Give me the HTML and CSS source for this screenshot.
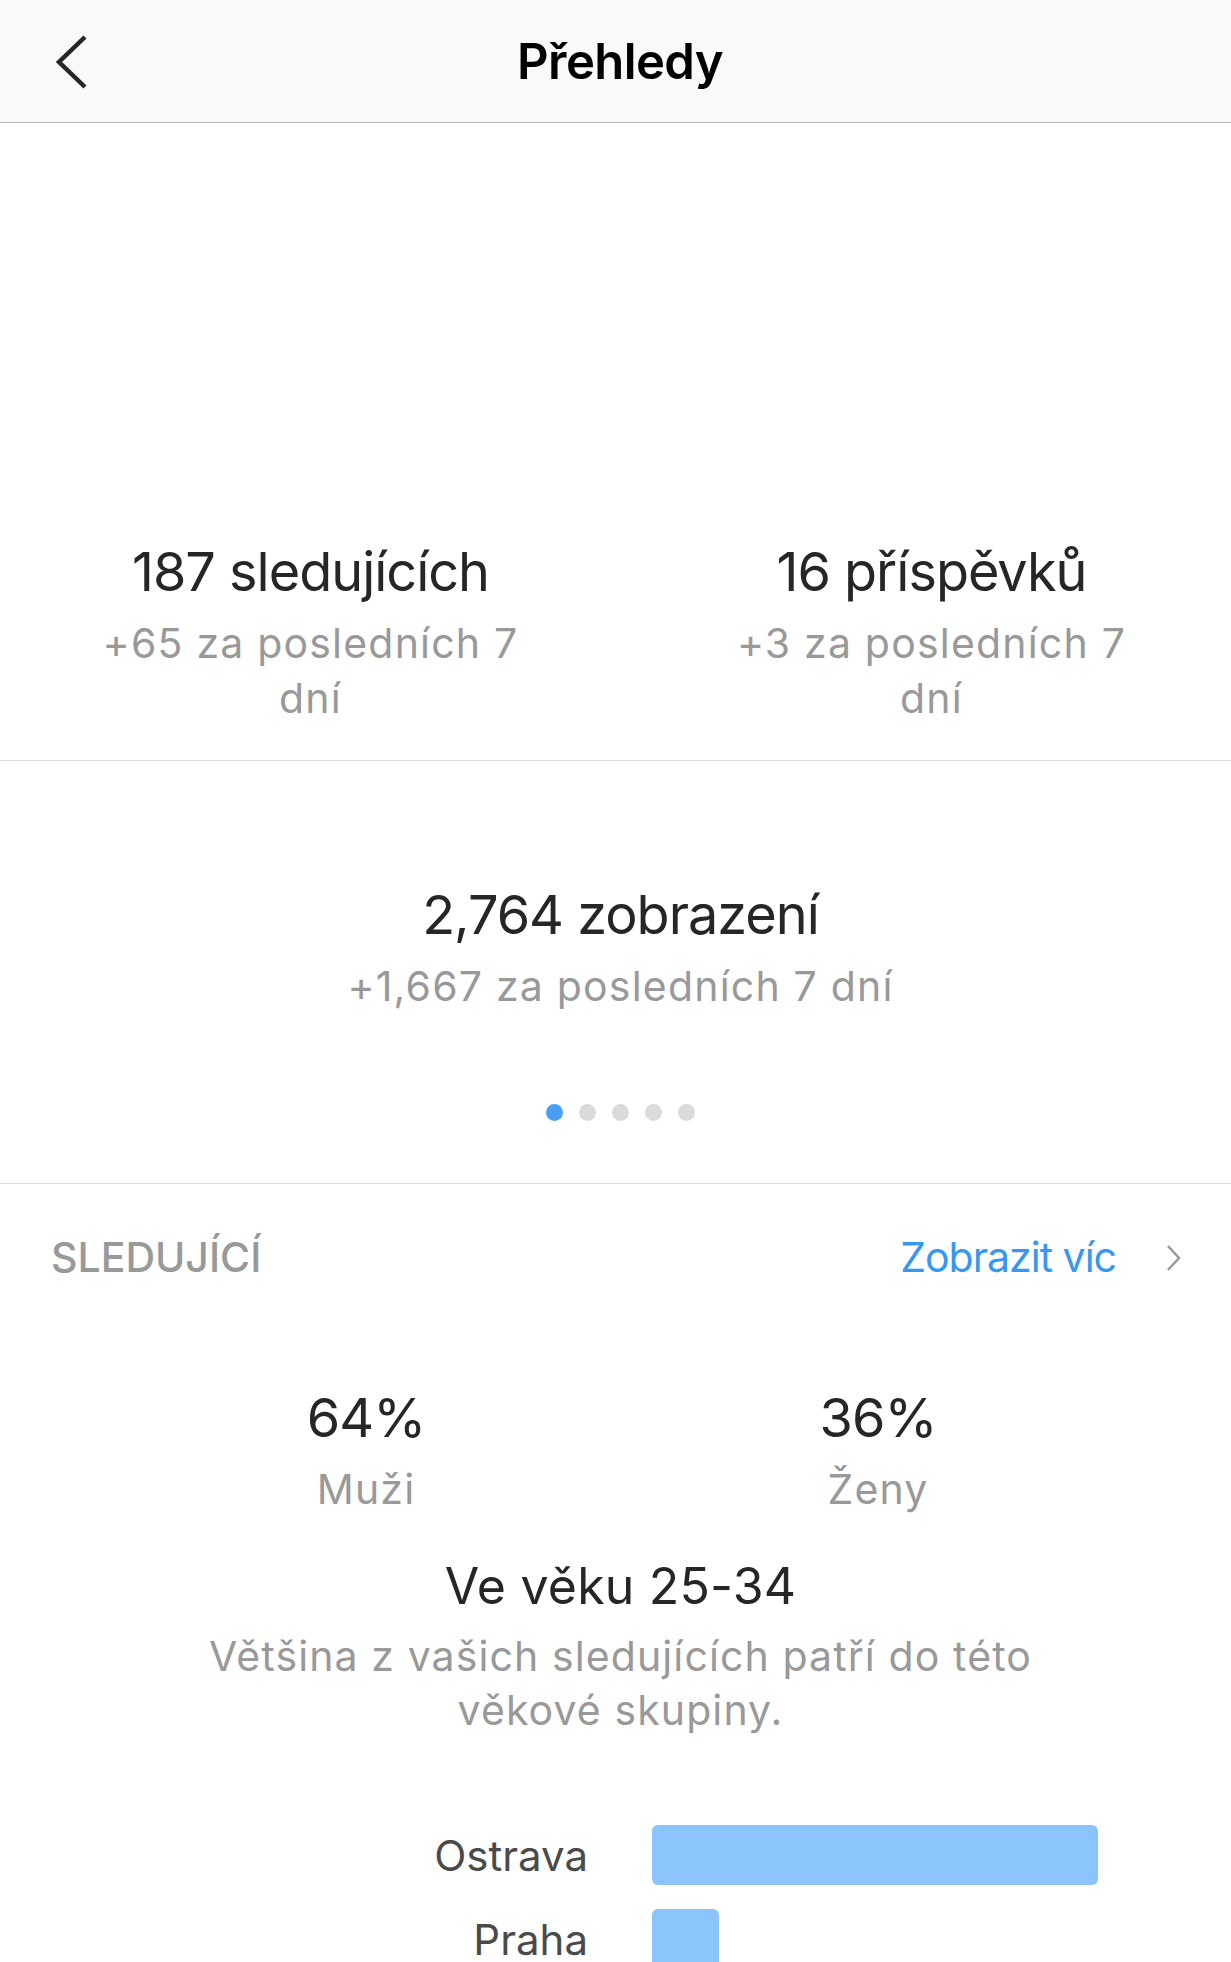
FILE: index.html
```html
<!DOCTYPE html>
<html lang="cs">
<head>
  <meta charset="UTF-8">
  <meta name="viewport" content="width=device-width, initial-scale=1.0">
  <title>Přehledy</title>
  <link rel="stylesheet" href="styles.css">
</head>
<body>

  <div class="page">
    <!-- Top bar -->
    <header class="topbar">
      <a class="back" href="#" aria-label="Zpět">
        <svg width="34" height="56" viewBox="0 0 34 56">
          <path d="M31 3 L5 28 L31 53" fill="none" stroke="#262626" stroke-width="4.5"/>
        </svg>
      </a>
      <h1>Přehledy</h1>
      <span></span>
    </header>

    <!-- Graph area (empty for now) -->
    <div class="chart"></div>

    <!-- Followers / posts -->
    <section class="stats">
      <div class="stat">
        <div class="stat-value">187 sledujících</div>
        <div class="stat-sub">+65 za posledních 7 dní</div>
      </div>
      <div class="stat">
        <div class="stat-value">16 příspěvků</div>
        <div class="stat-sub">+3 za posledních 7 dní</div>
      </div>
    </section>

    <!-- Impressions carousel -->
    <section class="impressions">
      <div class="stat-value">2,764 zobrazení</div>
      <div class="stat-sub">+1,667 za posledních 7 dní</div>
      <div class="dots">
        <span class="dot active"></span>
        <span class="dot"></span>
        <span class="dot"></span>
        <span class="dot"></span>
        <span class="dot"></span>
      </div>
    </section>

    <!-- Followers breakdown -->
    <section class="followers">
      <div class="section-head">
        <span class="section-title">Sledující</span>
        <a class="more" href="#">
          <span>Zobrazit víc</span>
          <svg width="16" height="28" viewBox="0 0 16 28">
            <path d="M2 2 L13 14 L2 26" fill="none" stroke="#999" stroke-width="2.5"/>
          </svg>
        </a>
      </div>

      <div class="gender">
        <div class="gender-item">
          <div class="stat-value">64%</div>
          <div class="stat-sub">Muži</div>
        </div>
        <div class="gender-item">
          <div class="stat-value">36%</div>
          <div class="stat-sub">Ženy</div>
        </div>
      </div>

      <div class="age">
        <div class="age-title">Ve věku 25-34</div>
        <div class="age-text">Většina z vašich sledujících patří do této věkové skupiny.</div>
      </div>

      <div class="cities">
        <div class="city">
          <span class="city-name">Ostrava</span>
          <div class="bar-track"><div class="bar" style="width: 100%"></div></div>
        </div>
        <div class="city">
          <span class="city-name">Praha</span>
          <div class="bar-track"><div class="bar" style="width: 15%"></div></div>
        </div>
      </div>
    </section>
  </div>

</body>
</html>
```

FILE: styles.css
```css
body {
  margin: 0;
  background-color: #fff;
  font-family: Inter, "Noto Sans", "Liberation Sans", sans-serif;
  color: #262626;
}

.page {
  width: 1231px;
  overflow: hidden;
}

/* top bar */
.topbar {
  height: 122px;
  background-color: #f9f9f9;
  border-bottom: 1px solid #bcbcbc;
  display: grid;
  grid-template-columns: 1fr auto 1fr;
  align-items: center;
}

.topbar h1 {
  margin: 0 0 0 9px;
  font-size: 49px;
  font-weight: 600;
  color: #000;
  letter-spacing: -0.6px;
}

.back {
  display: flex;
  padding-left: 54px;
  padding-top: 2px;
}

.chart {
  height: 416px;
}

/* shared number + caption */
.stat-value {
  font-size: 54px;
  line-height: 66px;
  letter-spacing: -1px;
  color: #262626;
}

.stat-sub {
  margin-top: 11px;
  font-size: 41px;
  line-height: 55px;
  letter-spacing: 1.2px;
  color: #999;
}

.stats {
  display: grid;
  grid-template-columns: repeat(2, 621px);
  text-align: center;
  padding-bottom: 34px;
  border-bottom: 1px solid #dbdbdb;
}

.stat .stat-sub {
  max-width: 440px;
  margin-left: auto;
  margin-right: auto;
}

.impressions {
  text-align: center;
  padding: 121px 0 62px 10px;
  border-bottom: 1px solid #dbdbdb;
}

.dots {
  display: flex;
  justify-content: center;
  gap: 16px;
  margin-top: 90px;
}

.dot {
  width: 17px;
  height: 17px;
  border-radius: 50%;
  background-color: #dbdbdb;
}

.dot.active {
  background-color: #4a9ff5;
}

/* followers section */
.followers {
  padding-top: 46px;
}

.section-head {
  display: flex;
  justify-content: space-between;
  align-items: center;
  padding: 0 49px 0 51px;
  font-size: 41px;
  line-height: 55px;
}

.section-title {
  text-transform: uppercase;
  font-weight: 500;
  color: #999;
}

.more {
  display: flex;
  align-items: center;
  gap: 50px;
  color: #3897f0;
  letter-spacing: -1px;
  text-decoration: none;
}

.gender {
  display: grid;
  grid-template-columns: repeat(2, 512px);
  justify-content: center;
  padding-left: 13px;
  margin-top: 100px;
  text-align: center;
}

.age {
  text-align: center;
  margin-top: 38px;
  padding-left: 10px;
}

.age-title {
  font-size: 50px;
  line-height: 62px;
  letter-spacing: 0.2px;
}

.age-text {
  max-width: 900px;
  margin: 12px auto 0;
  font-size: 41px;
  line-height: 54px;
  letter-spacing: 1.1px;
  color: #999;
}

.cities {
  margin-top: 88px;
  display: flex;
  flex-direction: column;
  gap: 24px;
}

.city {
  display: grid;
  grid-template-columns: 588px 446px;
  column-gap: 64px;
  align-items: center;
}

.city-name {
  text-align: right;
  font-size: 42px;
  color: #4a4a4a;
}

.bar-track {
  height: 60px;
}

.bar {
  height: 100%;
  background-color: #8bc4fb;
  border-radius: 6px;
}
```
